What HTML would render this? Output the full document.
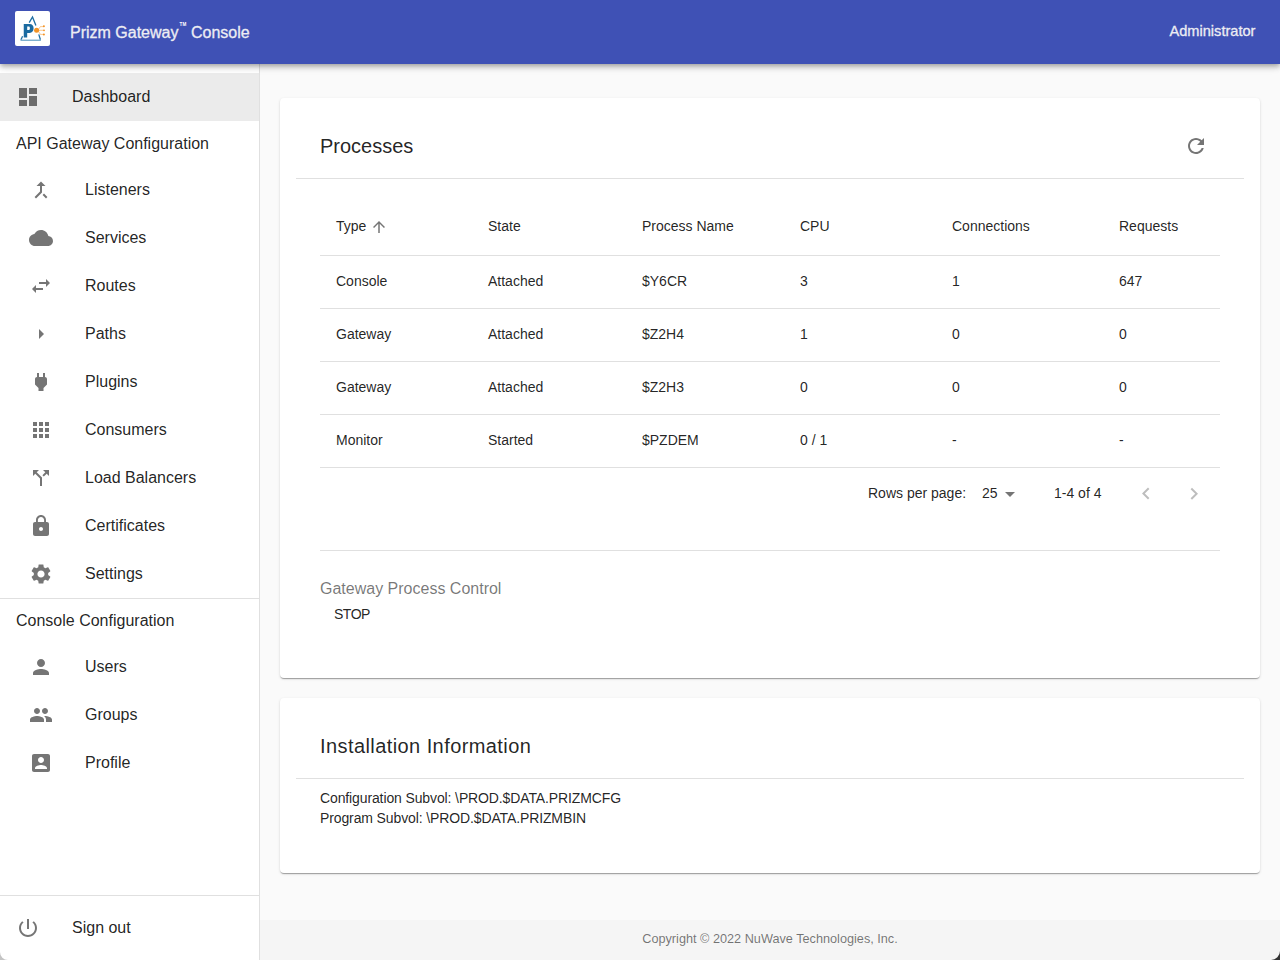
<!DOCTYPE html>
<html><head><meta charset="utf-8">
<style>
*{box-sizing:border-box;margin:0;padding:0}
html,body{width:1280px;height:960px;overflow:hidden;background:#fafafa;font-family:"Liberation Sans",sans-serif;color:rgba(0,0,0,0.87)}
.abs{position:absolute}
.t{position:absolute;white-space:nowrap;line-height:1}
svg.i{position:absolute}
#appbar{position:absolute;left:0;top:0;width:1280px;height:64px;background:#3f51b5;z-index:5;
 box-shadow:0px 2px 4px -1px rgba(0,0,0,0.2),0px 4px 5px 0px rgba(0,0,0,0.14),0px 1px 10px 0px rgba(0,0,0,0.12)}
#drawer{position:absolute;left:0;top:64px;width:260px;height:896px;background:#fff;border-right:1px solid rgba(0,0,0,0.12)}
.card{position:absolute;left:280px;width:980px;background:#fff;border-radius:4px;
 box-shadow:0px 2px 1px -1px rgba(0,0,0,0.2),0px 1px 1px 0px rgba(0,0,0,0.14),0px 1px 3px 0px rgba(0,0,0,0.12)}
.hl{position:absolute;height:1px;background:rgba(0,0,0,0.12)}
#footer{position:absolute;left:260px;top:920px;width:1020px;height:40px;background:#f5f5f5}
</style></head>
<body>
<div id="footer"></div>
<div class="t" style="left:470px;width:600px;text-align:center;top:933.25px;font-size:12.7px;color:rgba(0,0,0,0.54);">Copyright &copy; 2022 NuWave Technologies, Inc.</div>
<div id="drawer"></div>
<div class="abs" style="left:0;top:73px;width:259px;height:48px;background:rgba(0,0,0,0.08)"></div>
<svg class="i" style="left:16px;top:85px;width:24px;height:24px;fill:rgba(0,0,0,0.54)" viewBox="0 0 24 24"><path d="M3 13h8V3H3v10zm0 8h8v-6H3v6zm10 0h8V11h-8v10zm0-18v6h8V3h-8z"/></svg>
<div class="t" style="left:72px;top:89.46px;font-size:16px;color:rgba(0,0,0,0.87);">Dashboard</div>
<div class="t" style="left:16px;top:135.96px;font-size:16px;color:rgba(0,0,0,0.87);">API Gateway Configuration</div>
<svg class="i" style="left:29px;top:178px;width:24px;height:24px;fill:rgba(0,0,0,0.54)" viewBox="0 0 24 24"><path d="M17 20.41L18.41 19 15 15.59 13.59 17 17 20.41zM7.5 8H11v5.59L5.59 19 7 20.41l6-6V8h3.5L12 3.5 7.5 8z"/></svg>
<div class="t" style="left:85px;top:182.46px;font-size:16px;color:rgba(0,0,0,0.87);">Listeners</div>
<svg class="i" style="left:29px;top:226px;width:24px;height:24px;fill:rgba(0,0,0,0.54)" viewBox="0 0 24 24"><path d="M19.35 10.04C18.67 6.59 15.64 4 12 4 9.11 4 6.6 5.64 5.35 8.04 2.34 8.36 0 10.91 0 14c0 3.31 2.69 6 6 6h13c2.76 0 5-2.24 5-5 0-2.64-2.05-4.78-4.65-4.96z"/></svg>
<div class="t" style="left:85px;top:230.46px;font-size:16px;color:rgba(0,0,0,0.87);">Services</div>
<svg class="i" style="left:29px;top:274px;width:24px;height:24px;fill:rgba(0,0,0,0.54)" viewBox="0 0 24 24"><path d="M6.99 11L3 15l3.99 4v-3H14v-2H6.99v-3zM21 9l-3.99-4v3H10v2h7.01v3L21 9z"/></svg>
<div class="t" style="left:85px;top:278.46px;font-size:16px;color:rgba(0,0,0,0.87);">Routes</div>
<svg class="i" style="left:29px;top:322px;width:24px;height:24px;fill:rgba(0,0,0,0.54)" viewBox="0 0 24 24"><path d="M10 17l5-5-5-5v10z"/></svg>
<div class="t" style="left:85px;top:326.46px;font-size:16px;color:rgba(0,0,0,0.87);">Paths</div>
<svg class="i" style="left:29px;top:370px;width:24px;height:24px;fill:rgba(0,0,0,0.54)" viewBox="0 0 24 24"><path d="M16.01 7L16 3h-2v4h-4V3H8v4h-.01C7 6.99 6 7.99 6 8.99v5.49L9.5 18v3h5v-3l3.5-3.51v-5.5c0-1-1-2-1.99-1.99z"/></svg>
<div class="t" style="left:85px;top:374.46px;font-size:16px;color:rgba(0,0,0,0.87);">Plugins</div>
<svg class="i" style="left:29px;top:418px;width:24px;height:24px;fill:rgba(0,0,0,0.54)" viewBox="0 0 24 24"><path d="M4 8h4V4H4v4zm6 12h4v-4h-4v4zm-6 0h4v-4H4v4zm0-6h4v-4H4v4zm6 0h4v-4h-4v4zm6-10v4h4V4h-4zm-6 4h4V4h-4v4zm6 6h4v-4h-4v4zm0 6h4v-4h-4v4z"/></svg>
<div class="t" style="left:85px;top:422.46px;font-size:16px;color:rgba(0,0,0,0.87);">Consumers</div>
<svg class="i" style="left:29px;top:466px;width:24px;height:24px;fill:rgba(0,0,0,0.54)" viewBox="0 0 24 24"><path d="M14 4l2.29 2.29-2.88 2.88 1.42 1.42 2.88-2.88L20 10V4zm-4 0H4v6l2.29-2.29 4.71 4.7V20h2v-8.41l-5.29-5.3z"/></svg>
<div class="t" style="left:85px;top:470.46px;font-size:16px;color:rgba(0,0,0,0.87);">Load Balancers</div>
<svg class="i" style="left:29px;top:514px;width:24px;height:24px;fill:rgba(0,0,0,0.54)" viewBox="0 0 24 24"><path d="M18 8h-1V6c0-2.76-2.24-5-5-5S7 3.24 7 6v2H6c-1.1 0-2 .9-2 2v10c0 1.1.9 2 2 2h12c1.1 0 2-.9 2-2V10c0-1.1-.9-2-2-2zm-6 9c-1.1 0-2-.9-2-2s.9-2 2-2 2 .9 2 2-.9 2-2 2zm3.1-9H8.9V6c0-1.71 1.39-3.1 3.1-3.1 1.71 0 3.1 1.39 3.1 3.1v2z"/></svg>
<div class="t" style="left:85px;top:518.46px;font-size:16px;color:rgba(0,0,0,0.87);">Certificates</div>
<svg class="i" style="left:29px;top:562px;width:24px;height:24px;fill:rgba(0,0,0,0.54)" viewBox="0 0 24 24"><path d="M19.14 12.94c.04-.3.06-.61.06-.94 0-.32-.02-.64-.07-.94l2.03-1.58c.18-.14.23-.41.12-.61l-1.92-3.32c-.12-.22-.37-.29-.59-.22l-2.39.96c-.5-.38-1.03-.7-1.62-.94l-.36-2.54c-.04-.24-.24-.41-.48-.41h-3.84c-.24 0-.43.17-.47.41l-.36 2.54c-.59.24-1.13.57-1.62.94l-2.39-.96c-.22-.08-.47 0-.59.22L2.74 8.87c-.12.21-.08.47.12.61l2.03 1.58c-.05.3-.09.63-.09.94s.02.64.07.94l-2.03 1.58c-.18.14-.23.41-.12.61l1.92 3.32c.12.22.37.29.59.22l2.39-.96c.5.38 1.03.7 1.62.94l.36 2.54c.05.24.24.41.48.41h3.84c.24 0 .44-.17.47-.41l.36-2.54c.59-.24 1.13-.56 1.62-.94l2.39.96c.22.08.47 0 .59-.22l1.92-3.32c.12-.22.07-.47-.12-.61l-2.01-1.58zM12 15.6c-1.98 0-3.6-1.62-3.6-3.6s1.62-3.6 3.6-3.6 3.6 1.62 3.6 3.6-1.62 3.6-3.6 3.6z"/></svg>
<div class="t" style="left:85px;top:566.46px;font-size:16px;color:rgba(0,0,0,0.87);">Settings</div>
<div class="hl" style="left:0;top:598px;width:259px"></div>
<div class="t" style="left:16px;top:612.96px;font-size:16px;color:rgba(0,0,0,0.87);">Console Configuration</div>
<svg class="i" style="left:29px;top:655px;width:24px;height:24px;fill:rgba(0,0,0,0.54)" viewBox="0 0 24 24"><path d="M12 12c2.21 0 4-1.79 4-4s-1.79-4-4-4-4 1.79-4 4 1.79 4 4 4zm0 2c-2.67 0-8 1.34-8 4v2h16v-2c0-2.66-5.330-4-8-4z"/></svg>
<div class="t" style="left:85px;top:659.46px;font-size:16px;color:rgba(0,0,0,0.87);">Users</div>
<svg class="i" style="left:29px;top:703px;width:24px;height:24px;fill:rgba(0,0,0,0.54)" viewBox="0 0 24 24"><path d="M16 11c1.66 0 2.99-1.34 2.99-3S17.66 5 16 5c-1.66 0-3 1.34-3 3s1.34 3 3 3zm-8 0c1.66 0 2.99-1.34 2.99-3S9.66 5 8 5C6.34 5 5 6.34 5 8s1.34 3 3 3zm0 2c-2.33 0-7 1.17-7 3.5V19h14v-2.5c0-2.33-4.67-3.5-7-3.5zm8 0c-.29 0-.62.02-.97.05 1.16.84 1.97 1.97 1.97 3.45V19h6v-2.5c0-2.33-4.67-3.5-7-3.5z"/></svg>
<div class="t" style="left:85px;top:707.46px;font-size:16px;color:rgba(0,0,0,0.87);">Groups</div>
<svg class="i" style="left:29px;top:751px;width:24px;height:24px;fill:rgba(0,0,0,0.54)" viewBox="0 0 24 24"><path d="M3 5v14c0 1.1.89 2 2 2h14c1.1 0 2-.9 2-2V5c0-1.1-.9-2-2-2H5c-1.11 0-2 .9-2 2zm12 4c0 1.66-1.34 3-3 3s-3-1.34-3-3 1.34-3 3-3 3 1.34 3 3zm-9 8c0-2 4-3.1 6-3.1s6 1.1 6 3.1v1H6v-1z"/></svg>
<div class="t" style="left:85px;top:755.46px;font-size:16px;color:rgba(0,0,0,0.87);">Profile</div>
<div class="hl" style="left:0;top:895px;width:259px"></div>
<svg class="i" style="left:16px;top:916px;width:24px;height:24px;fill:rgba(0,0,0,0.54)" viewBox="0 0 24 24"><path d="M13 3h-2v10h2V3zm4.83 2.17l-1.42 1.42C17.99 7.86 19 9.81 19 12c0 3.87-3.13 7-7 7s-7-3.13-7-7c0-2.190 1.01-4.14 2.58-5.42L6.17 5.17C4.23 6.82 3 9.26 3 12c0 4.97 4.03 9 9 9s9-4.030 9-9c0-2.74-1.23-5.18-3.17-6.83z"/></svg>
<div class="t" style="left:72px;top:920.46px;font-size:16px;color:rgba(0,0,0,0.87);">Sign out</div>
<div class="card" style="top:98px;height:580px"></div>
<div class="t" style="left:320px;top:136.07px;font-size:20px;color:rgba(0,0,0,0.87);">Processes</div>
<svg class="i" style="left:1184px;top:134px;width:24px;height:24px;fill:rgba(0,0,0,0.54)" viewBox="0 0 24 24"><path d="M17.65 6.35C16.2 4.9 14.21 4 12 4c-4.42 0-7.99 3.58-7.99 8s3.57 8 7.99 8c3.73 0 6.84-2.55 7.73-6h-2.08c-.82 2.33-3.04 4-5.65 4-3.31 0-6-2.69-6-6s2.69-6 6-6c1.66 0 3.14.69 4.22 1.78L13 11h7V4l-2.35 2.35z"/></svg>
<div class="hl" style="left:296px;top:178px;width:948px"></div>
<div class="t" style="left:336px;top:218.75px;font-size:14px;color:rgba(0,0,0,0.87);">Type</div>
<div class="t" style="left:488px;top:218.75px;font-size:14px;color:rgba(0,0,0,0.87);">State</div>
<div class="t" style="left:642px;top:218.75px;font-size:14px;color:rgba(0,0,0,0.87);">Process Name</div>
<div class="t" style="left:800px;top:218.75px;font-size:14px;color:rgba(0,0,0,0.87);">CPU</div>
<div class="t" style="left:952px;top:218.75px;font-size:14px;color:rgba(0,0,0,0.87);">Connections</div>
<div class="t" style="left:1119px;top:218.75px;font-size:14px;color:rgba(0,0,0,0.87);">Requests</div>
<svg class="i" style="left:370px;top:218px;width:18px;height:18px;fill:rgba(0,0,0,0.54)" viewBox="0 0 24 24"><path d="M4 12l1.41 1.41L11 7.83V20h2V7.83l5.58 5.59L20 12l-8-8-8 8z"/></svg>
<div class="t" style="left:336px;top:274.15px;font-size:14px;color:rgba(0,0,0,0.87);">Console</div>
<div class="t" style="left:488px;top:274.15px;font-size:14px;color:rgba(0,0,0,0.87);">Attached</div>
<div class="t" style="left:642px;top:274.15px;font-size:14px;color:rgba(0,0,0,0.87);">$Y6CR</div>
<div class="t" style="left:800px;top:274.15px;font-size:14px;color:rgba(0,0,0,0.87);">3</div>
<div class="t" style="left:952px;top:274.15px;font-size:14px;color:rgba(0,0,0,0.87);">1</div>
<div class="t" style="left:1119px;top:274.15px;font-size:14px;color:rgba(0,0,0,0.87);">647</div>
<div class="t" style="left:336px;top:327.15px;font-size:14px;color:rgba(0,0,0,0.87);">Gateway</div>
<div class="t" style="left:488px;top:327.15px;font-size:14px;color:rgba(0,0,0,0.87);">Attached</div>
<div class="t" style="left:642px;top:327.15px;font-size:14px;color:rgba(0,0,0,0.87);">$Z2H4</div>
<div class="t" style="left:800px;top:327.15px;font-size:14px;color:rgba(0,0,0,0.87);">1</div>
<div class="t" style="left:952px;top:327.15px;font-size:14px;color:rgba(0,0,0,0.87);">0</div>
<div class="t" style="left:1119px;top:327.15px;font-size:14px;color:rgba(0,0,0,0.87);">0</div>
<div class="t" style="left:336px;top:380.15px;font-size:14px;color:rgba(0,0,0,0.87);">Gateway</div>
<div class="t" style="left:488px;top:380.15px;font-size:14px;color:rgba(0,0,0,0.87);">Attached</div>
<div class="t" style="left:642px;top:380.15px;font-size:14px;color:rgba(0,0,0,0.87);">$Z2H3</div>
<div class="t" style="left:800px;top:380.15px;font-size:14px;color:rgba(0,0,0,0.87);">0</div>
<div class="t" style="left:952px;top:380.15px;font-size:14px;color:rgba(0,0,0,0.87);">0</div>
<div class="t" style="left:1119px;top:380.15px;font-size:14px;color:rgba(0,0,0,0.87);">0</div>
<div class="t" style="left:336px;top:433.15px;font-size:14px;color:rgba(0,0,0,0.87);">Monitor</div>
<div class="t" style="left:488px;top:433.15px;font-size:14px;color:rgba(0,0,0,0.87);">Started</div>
<div class="t" style="left:642px;top:433.15px;font-size:14px;color:rgba(0,0,0,0.87);">$PZDEM</div>
<div class="t" style="left:800px;top:433.15px;font-size:14px;color:rgba(0,0,0,0.87);">0 / 1</div>
<div class="t" style="left:952px;top:433.15px;font-size:14px;color:rgba(0,0,0,0.87);">-</div>
<div class="t" style="left:1119px;top:433.15px;font-size:14px;color:rgba(0,0,0,0.87);">-</div>
<div class="hl" style="left:320px;top:255px;width:900px;background:rgba(224,224,224,1)"></div>
<div class="hl" style="left:320px;top:308px;width:900px;background:rgba(224,224,224,1)"></div>
<div class="hl" style="left:320px;top:361px;width:900px;background:rgba(224,224,224,1)"></div>
<div class="hl" style="left:320px;top:414px;width:900px;background:rgba(224,224,224,1)"></div>
<div class="hl" style="left:320px;top:467px;width:900px;background:rgba(224,224,224,1)"></div>
<div class="t" style="left:868px;top:485.85px;font-size:14px;color:rgba(0,0,0,0.87);">Rows per page:</div>
<div class="t" style="left:982px;top:485.85px;font-size:14px;color:rgba(0,0,0,0.87);">25</div>
<svg class="i" style="left:998px;top:482px;width:24px;height:24px;fill:rgba(0,0,0,0.54)" viewBox="0 0 24 24"><path d="M7 10l5 5 5-5z"/></svg>
<div class="t" style="left:1054px;top:485.85px;font-size:14px;color:rgba(0,0,0,0.87);">1-4 of 4</div>
<svg class="i" style="left:1134px;top:482px;width:24px;height:24px;fill:rgba(0,0,0,0.26)" viewBox="0 0 24 24"><path d="M15.41 16.09l-4.58-4.59 4.58-4.59L14 5.5l-6 6 6 6z"/></svg>
<svg class="i" style="left:1182px;top:482px;width:24px;height:24px;fill:rgba(0,0,0,0.26)" viewBox="0 0 24 24"><path d="M8.59 16.34l4.58-4.59-4.58-4.59L10 5.75l6 6-6 6z"/></svg>
<div class="hl" style="left:320px;top:550px;width:900px"></div>
<div class="t" style="left:320px;top:581.21px;font-size:16px;color:rgba(0,0,0,0.54);">Gateway Process Control</div>
<div class="t" style="left:334px;top:607.15px;font-size:14px;color:rgba(0,0,0,0.87);letter-spacing:-0.5px">STOP</div>
<div class="card" style="top:698px;height:175px"></div>
<div class="t" style="left:320px;top:735.97px;font-size:20px;color:rgba(0,0,0,0.87);letter-spacing:0.42px">Installation Information</div>
<div class="hl" style="left:296px;top:778px;width:948px"></div>
<div class="t" style="left:320px;top:791.15px;font-size:14px;color:rgba(0,0,0,0.87);letter-spacing:-0.12px">Configuration Subvol: \PROD.$DATA.PRIZMCFG</div>
<div class="t" style="left:320px;top:810.95px;font-size:14px;color:rgba(0,0,0,0.87);letter-spacing:-0.12px">Program Subvol: \PROD.$DATA.PRIZMBIN</div>
<div id="appbar">
<svg class="abs" style="left:15px;top:11px" width="35" height="35" viewBox="0 0 35 35">
<rect x="0" y="0" width="35" height="35" rx="2" fill="#fff"/>
<g stroke="#1f6ea3" stroke-width="1.3" fill="none" stroke-linecap="butt">
<path d="M14.2 11.6L17.5 5.9L20.9 14.5"/>
<path d="M7.6 25.2L5.9 28.8"/>
<path d="M23.8 23.4L25.4 28.8"/>
</g>
<path d="M5.5 28.6H25.9V29.9H5.5Z" fill="#6fa6c8"/>
<path d="M8.75 12.9H14.6C17.2 12.9 18.6 14.6 18.6 17.3C18.6 20.1 17.1 21.9 14.6 21.9H12.2V26.6H8.75ZM12.2 15.6V19.1H13.8C14.5 19.1 14.9 18.5 14.9 17.35C14.9 16.2 14.5 15.6 13.8 15.6Z" fill="#1a6aa0"/>
<g fill="#f39325" stroke="#f39325">
<circle cx="21.6" cy="19.3" r="2.5" stroke="none"/>
<path d="M21.6 19.3H28.6M23.5 18.3L25.4 15.6H28.6M23.5 20.3L25.4 23.4H28.6" stroke-width="0.6" fill="none" opacity="0.85"/>
<circle cx="28.9" cy="15.2" r="1.0" stroke="none"/>
<circle cx="29.0" cy="19.3" r="0.9" stroke="none"/>
<circle cx="28.9" cy="23.6" r="1.0" stroke="none"/>
</g>
</svg>
<div class="t" style="left:179.5px;top:22.6px;font-size:4.6px;color:#fff;font-weight:bold;letter-spacing:0.1px">TM</div>
<div class="t" style="left:70px;top:25.46px;font-size:16px;color:#ededf3;-webkit-text-stroke:0.3px #ededf3">Prizm Gateway</div>
<div class="t" style="left:191px;top:25.46px;font-size:16px;color:#ededf3;-webkit-text-stroke:0.3px #ededf3">Console</div>
<div class="t" style="left:1169.5px;top:24.14px;font-size:14.6px;color:#ededf3;-webkit-text-stroke:0.3px #ededf3">Administrator</div>
</div>
<svg class="abs" style="left:1260px;top:940px;z-index:9" width="20" height="20" viewBox="1260 940 20 20"><path d="M1280 951A9 9 0 0 1 1271 960H1280Z" fill="#333"/></svg>
<svg class="abs" style="left:0;top:940px;z-index:9" width="20" height="20" viewBox="0 940 20 20"><path d="M0 952A8 8 0 0 0 8 960H0Z" fill="#c4c4c4"/></svg>
</body></html>
